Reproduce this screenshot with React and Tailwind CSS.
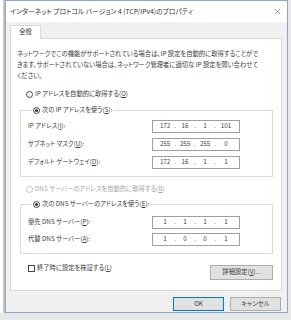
import { X } from "lucide-react";

function Radio({ checked, disabled }) {
  return (
    <span
      className={`flex h-[7px] w-[7px] shrink-0 items-center justify-center rounded-full border bg-white ${disabled ? "border-[#c4c4c4]" : "border-[#444]"}`}
    >
      {checked && <span className="h-[3px] w-[3px] rounded-full bg-[#333]" />}
    </span>
  );
}

function IpBox({ parts }) {
  return (
    <div className="flex h-[13px] w-[88px] items-center border border-[#a0a0a0] bg-white px-[3px] text-[6.3px] text-[#444]">
      {parts.map((p, i) => (
        <div key={i} className="flex flex-1 items-center">
          <span className="flex-1 text-center">{p}</span>
          {i < 3 && <span>.</span>}
        </div>
      ))}
    </div>
  );
}

function Row({ label, parts }) {
  return (
    <div className="flex items-center">
      <span className="w-[124px]">{label}</span>
      <IpBox parts={parts} />
    </div>
  );
}

export default function App() {
  return (
    <div className="flex h-[320px] w-[291px] bg-[#e6e8ea] font-['Noto_Sans_CJK_JP',sans-serif] text-[6.3px] leading-none text-[#3c3c3c] [font-feature-settings:'palt']">
      {/* window behind the dialog */}
      <div className="flex h-[313px] w-[5px] border-r border-[#b9c0c8] bg-white">
        <div className="ml-[3px] h-full w-px bg-[#c8c8c8]" />
      </div>

      <div className="flex h-[313px] w-[283px] flex-col border border-[#8fa6c4] bg-[#f0f0f0]">
        {/* title bar */}
        <div className="flex h-[21px] items-center justify-between bg-white pl-[4px] pr-[5px]">
          <span className="text-[6.8px] text-[#333]">
            インターネット プロトコル バージョン 4 (TCP/IPv4)のプロパティ
          </span>
          <X className="h-[9px] w-[9px] text-[#444]" strokeWidth={1.3} />
        </div>

        <div className="flex flex-col pl-[4px] pr-[5px] pt-[3px]">
          {/* tab */}
          <div className="-mb-px flex">
            <div className="z-10 flex h-[14px] w-[31px] items-center justify-center border border-b-0 border-[#d9d9d9] bg-white">
              全般
            </div>
          </div>

          {/* panel */}
          <div className="flex h-[253px] flex-col border border-[#d9d9d9] bg-white">
            <p className="ml-[6px] mt-[9px] whitespace-nowrap text-[6.3px] leading-[11px]">
              ネットワークでこの機能がサポートされている場合は、IP 設定を自動的に取得することがで
              <br />
              きます。サポートされていない場合は、ネットワーク管理者に適切な IP 設定を問い合わせて
              <br />
              ください。
            </p>

            <div className="ml-[15px] mt-[7px] flex h-[12px] items-center gap-[2px]">
              <Radio />
              <span>
                IP アドレスを自動的に取得する(<u>O</u>)
              </span>
            </div>

            <fieldset className="ml-[9px] mr-[8px] mt-[4px] flex flex-col gap-[5px] border border-[#dcdcdc] pb-[7px] pl-[7px] pt-[4px]">
              <legend className="ml-[4px] flex h-[12px] items-center gap-[2px] px-[1px]">
                <Radio checked />
                <span>
                  次の IP アドレスを使う(<u>S</u>):
                </span>
              </legend>
              <Row label={<>IP アドレス(<u>I</u>):</>} parts={["172", "16", "1", "101"]} />
              <Row label={<>サブネット マスク(<u>U</u>):</>} parts={["255", "255", "255", "0"]} />
              <Row label={<>デフォルト ゲートウェイ(<u>D</u>):</>} parts={["172", "16", "1", "1"]} />
            </fieldset>

            <div className="ml-[15px] mt-[6px] flex h-[12px] items-center gap-[2px] text-[#a6a6a6]">
              <Radio disabled />
              <span>
                DNS サーバーのアドレスを自動的に取得する(<u>B</u>)
              </span>
            </div>

            <fieldset className="ml-[9px] mr-[8px] mt-[3px] flex flex-col gap-[4px] border border-[#dcdcdc] pb-[7px] pl-[7px] pt-[6px]">
              <legend className="ml-[4px] flex h-[12px] items-center gap-[2px] px-[1px]">
                <Radio checked />
                <span>
                  次の DNS サーバーのアドレスを使う(<u>E</u>):
                </span>
              </legend>
              <Row label={<>優先 DNS サーバー(<u>P</u>):</>} parts={["1", "1", "1", "1"]} />
              <Row label={<>代替 DNS サーバー(<u>A</u>):</>} parts={["1", "0", "0", "1"]} />
            </fieldset>

            <div className="ml-[17px] mr-[8px] mt-[11px] flex items-start justify-between">
              <div className="flex items-center gap-[2px]">
                <span className="h-[7px] w-[7px] border border-[#444] bg-white" />
                <span>
                  終了時に設定を検証する(<u>L</u>)
                </span>
              </div>
              <div className="flex h-[15px] w-[63px] items-center justify-center border border-[#adadad] bg-[#e1e1e1]">
                詳細設定(<u>V</u>)...
              </div>
            </div>
          </div>

          {/* dialog buttons */}
          <div className="mt-[6px] flex justify-end gap-[6px] pr-[1px]">
            <div className="flex h-[14px] w-[51px] items-center justify-center border border-[#0078d7] bg-[#e1e1e1]">
              OK
            </div>
            <div className="flex h-[14px] w-[51px] items-center justify-center border border-[#adadad] bg-[#e1e1e1]">
              キャンセル
            </div>
          </div>
        </div>
      </div>
    </div>
  );
}
